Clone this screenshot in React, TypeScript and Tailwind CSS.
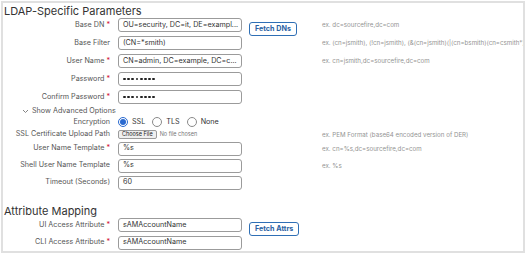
import React from 'react';

type Field = {
  label: string;
  required?: boolean;
  value: string;
  button?: string;
  hint?: string;
  dots?: boolean;
};

const Label: React.FC<{ text: string; required?: boolean }> = ({ text, required }) => (
  <div className="w-[107px] shrink-0 text-right text-[7.2px] text-[#555] whitespace-nowrap">
    {text}
    {required && <span className="text-[#d0021b]"> *</span>}
  </div>
);

const Dots = () => (
  <div className="flex items-center gap-[1.4px]">
    {[0, 1, 2, 3, 4, 5, 6, 7].map(i => (
      <div key={i} className="w-[2.8px] h-[2.8px] rounded-full bg-[#222]" />
    ))}
  </div>
);

const FieldRow: React.FC<{ field: Field; tall?: boolean }> = ({ field, tall }) => (
  <div className={`flex items-center ${tall ? 'h-[18px]' : 'h-[17px]'}`}>
    <Label text={field.label} required={field.required} />
    <div className="ml-[8px] w-[124px] h-[14px] shrink-0 flex items-center rounded-[3px] border border-[#9b9b9b] bg-white pl-[4px] text-[7.2px] text-[#333] whitespace-nowrap overflow-hidden">
      {field.dots ? <Dots /> : field.value}
    </div>
    <div className="w-[80px] shrink-0 pl-[7px]">
      {field.button && (
        <div className="inline-flex items-center justify-center h-[14px] px-[5px] rounded-[3px] border border-[#2f6fb5] text-[7.2px] font-bold text-[#2b62a3] whitespace-nowrap">
          {field.button}
        </div>
      )}
    </div>
    {field.hint && (
      <div className="text-[6.2px] text-[#939393] whitespace-nowrap">{field.hint}</div>
    )}
  </div>
);

const Radio: React.FC<{ label: string; checked?: boolean }> = ({ label, checked }) => (
  <div className="flex items-center mr-[7px]">
    <div
      className={`w-[10px] h-[10px] rounded-full border flex items-center justify-center ${
        checked ? 'border-[#2a6ad0]' : 'border-[#8a8a8a]'
      }`}
    >
      {checked && <div className="w-[6px] h-[6px] rounded-full bg-[#2a6ad0]" />}
    </div>
    <span className="ml-[4px] text-[7.2px] text-[#333]">{label}</span>
  </div>
);

const topFields: Field[] = [
  { label: 'Base DN', required: true, value: 'OU=security, DC=it, DE=exampl...', button: 'Fetch DNs', hint: 'ex. dc=sourcefire,dc=com' },
  { label: 'Base Filter', value: '(CN=*smith)', hint: 'ex. (cn=jsmith), (!cn=jsmith), (&(cn=jsmith)(|(cn=bsmith)(cn=csmith*)))' },
  { label: 'User Name', required: true, value: 'CN=admin, DC=example, DC=c...', hint: 'ex. cn=jsmith,dc=sourcefire,dc=com' },
  { label: 'Password', required: true, value: '', dots: true },
  { label: 'Confirm Password', required: true, value: '', dots: true },
];

const templateFields: Field[] = [
  { label: 'User Name Template', required: true, value: '%s', hint: 'ex. cn=%s,dc=sourcefire,dc=com' },
  { label: 'Shell User Name Template', value: '%s', hint: 'ex. %s' },
  { label: 'Timeout (Seconds)', value: '60' },
];

const attrFields: Field[] = [
  { label: 'UI Access Attribute', required: true, value: 'sAMAccountName', button: 'Fetch Attrs' },
  { label: 'CLI Access Attribute', required: true, value: 'sAMAccountName' },
];

export default function App() {
  return (
    <div className="bg-white w-[528px] h-[254px] pt-[1px] pl-[1px]" style={{ fontFamily: 'Inter, "Liberation Sans", sans-serif' }}>
      <div className="w-[524px] h-[252px] border-2 border-[#e0e0e0] overflow-hidden">
        <div className="h-[13px] pl-[1px] text-[11px] leading-[17px] text-[#333] whitespace-nowrap">LDAP-Specific Parameters</div>

        {topFields.map(f => (
          <FieldRow key={f.label} field={f} tall />
        ))}

        {/* Advanced options */}
        <div className="h-[10px] flex items-center pl-[19px] text-[7.2px] text-[#555]">
          <svg width="7" height="5" viewBox="0 0 7 5" className="mr-[3px]">
            <path d="M1 1 L3.5 3.5 L6 1" fill="none" stroke="#777" strokeWidth="0.9" />
          </svg>
          Show Advanced Options
        </div>

        <div className="h-[13px] flex items-center">
          <Label text="Encryption" />
          <div className="ml-[8px] flex items-center">
            <Radio label="SSL" checked />
            <Radio label="TLS" />
            <Radio label="None" />
          </div>
        </div>

        <div className="h-[11px] flex items-center">
          <Label text="SSL Certificate Upload Path" />
          <div className="ml-[8px] w-[204px] shrink-0 flex items-center">
            <div className="h-[9px] px-[3px] flex items-center rounded-[2px] border border-[#9b9b9b] bg-[#efefef] text-[5.5px] text-[#222]">
              Choose File
            </div>
            <span className="ml-[3px] text-[5.5px] text-[#777]">No file chosen</span>
          </div>
          <div className="text-[6.2px] text-[#939393] whitespace-nowrap">
            ex. PEM Format (base64 encoded version of DER)
          </div>
        </div>

        {templateFields.map(f => (
          <FieldRow key={f.label} field={f} />
        ))}

        <div className="mt-[12px] h-[13px] pl-[1px] text-[11px] leading-[16px] text-[#333] whitespace-nowrap">Attribute Mapping</div>

        <FieldRow field={attrFields[0]} tall />
        <FieldRow field={attrFields[1]} />
      </div>
    </div>
  );
}
